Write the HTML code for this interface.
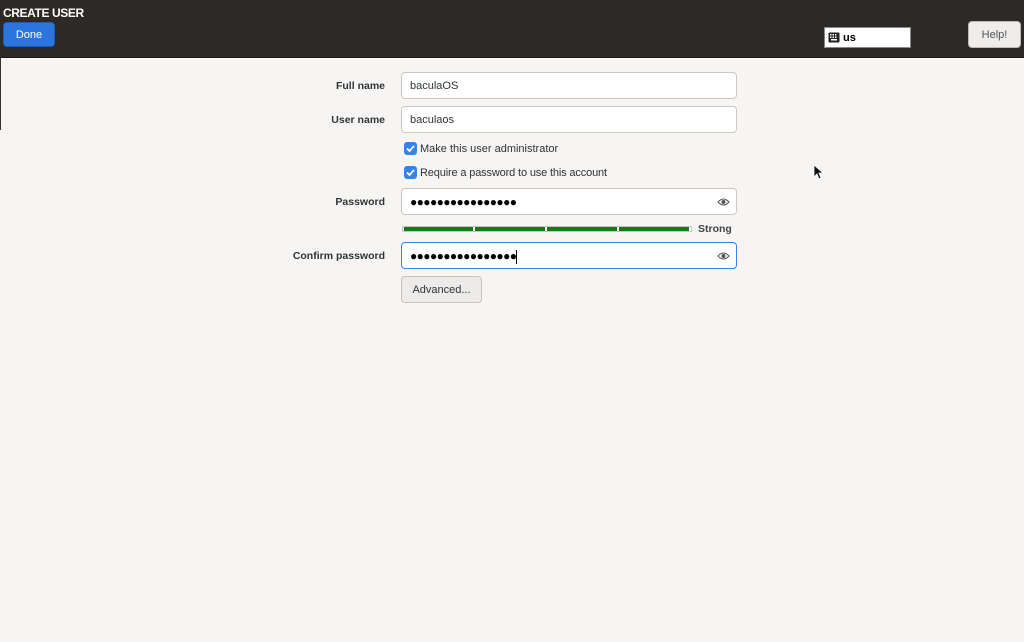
<!DOCTYPE html>
<html><head><meta charset="utf-8"><style>
*{box-sizing:border-box;margin:0;padding:0}
body{width:1024px;height:642px;overflow:hidden;background:#f6f5f4;font-family:"Liberation Sans","DejaVu Sans",sans-serif;font-size:11px;color:#2e3436;position:relative}
.hdr{position:absolute;left:0;top:0;width:1024px;height:58px;background:#2d2926;border-bottom:1px solid #1c1a19}
.a{position:absolute}
.lbl{position:absolute;right:639px;font-weight:bold;font-size:10.5px;color:#2e3436}
.inp{position:absolute;left:401px;width:336px;height:27px;background:#fff;border:1px solid #cdc7c2;border-radius:4px;padding:0 8px;line-height:27px;font-size:11px}
.dots{font-size:12px;letter-spacing:-0.6px;color:#000}
.chk{position:absolute;left:404px;width:13px;height:13px;background:#3584e4;border-radius:3px}
.chk svg{position:absolute;left:1px;top:1px}
.eye{position:absolute;right:6px;top:8px}
.seg{position:absolute;top:227px;height:4px;background:#167a16}
</style></head><body>
<div class="hdr"></div>
<div class="a" style="left:3px;top:6px;color:#fff;font-weight:bold;font-size:12px;letter-spacing:-0.4px">CREATE USER</div>
<div class="a" style="left:3px;top:22px;width:52px;height:25px;background:#2a76dd;border:1px solid #1d5fb8;border-radius:4px;color:#fff;text-align:center;line-height:24px;font-size:11px">Done</div>
<div class="a" style="left:824px;top:27px;width:87px;height:21px;background:#fff;border:1px solid #888"></div>
<svg class="a" style="left:828px;top:32px" width="12" height="11" viewBox="0 0 12 11"><rect x="0.5" y="0.5" width="11" height="10" rx="1" fill="#222"/><g fill="#fff"><rect x="2" y="2" width="1.5" height="1.5"/><rect x="4.5" y="2" width="1.5" height="1.5"/><rect x="7" y="2" width="1.5" height="1.5"/><rect x="2" y="4.5" width="1.5" height="1.5"/><rect x="4.5" y="4.5" width="1.5" height="1.5"/><rect x="7" y="4.5" width="1.5" height="1.5"/><rect x="3" y="7" width="6" height="1.5"/></g></svg>
<div class="a" style="left:843px;top:32px;font-weight:bold;font-size:11px;color:#000">us</div>
<div class="a" style="left:968px;top:21px;width:53px;height:27px;background:#eeedec;border:1px solid #bfb9b4;border-radius:4px;color:#555;text-align:center;line-height:27px;font-size:11px">Help!</div>
<div class="a" style="left:0;top:58px;width:1px;height:72px;background:#333"></div>

<div class="lbl" style="top:80px">Full name</div>
<div class="inp" style="top:72px">baculaOS</div>
<div class="lbl" style="top:114px">User name</div>
<div class="inp" style="top:106px">baculaos</div>
<div class="chk" style="top:142px"><svg width="11" height="11" viewBox="0 0 11 11"><path d="M2 5.5l2.5 2.5 4.5-5" stroke="#fff" stroke-width="1.8" fill="none"/></svg></div>
<div class="a" style="left:420px;top:143px">Make this user administrator</div>
<div class="chk" style="top:166px"><svg width="11" height="11" viewBox="0 0 11 11"><path d="M2 5.5l2.5 2.5 4.5-5" stroke="#fff" stroke-width="1.8" fill="none"/></svg></div>
<div class="a" style="left:420px;top:167px;letter-spacing:-0.15px">Require a password to use this account</div>
<div class="lbl" style="top:196px">Password</div>
<div class="inp dots" style="top:188px">●●●●●●●●●●●●●●●●<svg class="eye" width="13" height="10" viewBox="0 0 13 10"><path d="M1 5Q6.5-1 12 5Q6.5 11 1 5Z" fill="none" stroke="#555" stroke-width="1"/><circle cx="6.5" cy="5" r="2" fill="#555"/></svg></div>
<div class="a" style="left:402px;top:226px;width:290px;height:6px;border:1px solid #c8c3bf;background:#fff"></div>
<div class="seg" style="left:404px;width:69px"></div>
<div class="seg" style="left:475px;width:70px"></div>
<div class="seg" style="left:547px;width:70px"></div>
<div class="seg" style="left:619px;width:70px"></div>
<div class="a" style="left:698px;top:223px;font-weight:bold;color:#444;font-size:10.5px">Strong</div>
<div class="lbl" style="top:250px">Confirm password</div>
<div class="inp dots" style="top:242px;border-color:#3584e4">●●●●●●●●●●●●●●●●<span style="display:inline-block;width:1px;height:14px;background:#000;vertical-align:middle"></span><svg class="eye" width="13" height="10" viewBox="0 0 13 10"><path d="M1 5Q6.5-1 12 5Q6.5 11 1 5Z" fill="none" stroke="#555" stroke-width="1"/><circle cx="6.5" cy="5" r="2" fill="#555"/></svg></div>
<div class="a" style="left:401px;top:276px;width:81px;height:27px;background:#edebe9;border:1px solid #c8c3bf;border-radius:4px;text-align:center;line-height:27px">Advanced...</div>
<svg class="a" style="left:813px;top:164px" width="10" height="16" viewBox="0 0 10 16"><path d="M1 1v12l3-3 2 5 2-1-2-5h4z" fill="#111" stroke="#fff" stroke-width="0.8"/></svg>
</body></html>
